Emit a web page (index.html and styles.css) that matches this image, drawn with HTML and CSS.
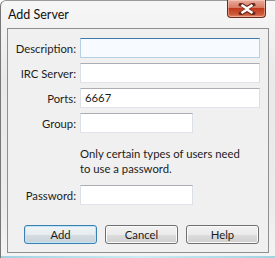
FILE: index.html
```html
<!DOCTYPE html>
<html>
<head>
<meta charset="utf-8">
<link rel="stylesheet" href="styles.css">
</head>
<body>
<div class="window">
  <div class="titlebar">
    <span class="title">Add Server</span>
    <div class="close">
      <svg width="18" height="12" viewBox="0 0 18 12">
        <path d="M3 1.5 L9 5 L15 1.5 M3 10.5 L9 7 L15 10.5" fill="none" stroke="#6a2a1c" stroke-width="4.2" stroke-linecap="square"/>
        <path d="M3.5 2 L9 5.5 L14.5 2 M3.5 10 L9 6.5 L14.5 10" fill="none" stroke="#ffffff" stroke-width="2.6"/>
      </svg>
    </div>
  </div>
  <div class="panel">
    <div class="form">
      <label class="lbl">Description:</label>
      <div class="field wide focus"></div>
      <label class="lbl">IRC Server:</label>
      <div class="field wide"></div>
      <label class="lbl">Ports:</label>
      <div class="field wide">6667</div>
      <label class="lbl">Group:</label>
      <div class="field short"></div>
      <div></div>
      <p class="note">Only certain types of users need<br>to use a password.</p>
      <label class="lbl">Password:</label>
      <div class="field short"></div>
    </div>
    <div class="buttons">
      <div class="btn default">Add</div>
      <div class="btn">Cancel</div>
      <div class="btn">Help</div>
    </div>
  </div>
</div>
</body>
</html>
```
FILE: styles.css
```css
html, body {
  margin: 0;
  padding: 0;
  background: #ffffff;
}
body {
  font-family: Lato, "Noto Sans", sans-serif;
  font-size: 11.3px;
  color: #1c1c1c;
}
.window {
  width: 275px;
  height: 258px;
  box-sizing: border-box;
  border-left: 1px solid #777;
  border-top: 1px solid #9a9a9a;
  border-radius: 6px 0 0 0;
  background: linear-gradient(#f7f7f7, #e9e9e9 30%, #ececec 80%, #f4f4f4);
  display: flex;
  flex-direction: column;
  position: relative;
}
.titlebar {
  height: 27px;
  display: flex;
  justify-content: space-between;
  align-items: flex-start;
  padding-left: 7px;
  padding-right: 9px;
}
.title {
  font-size: 12.5px;
  margin-top: 6px;
  color: #111;
}
.close {
  margin-top: -1px;
  width: 39px;
  height: 18px;
  box-sizing: border-box;
  border: 1px solid #6e2a1d;
  border-top: none;
  border-radius: 0 0 4px 4px;
  background: linear-gradient(#e9ae9e, #d87a62 45%, #c0391c 50%, #cf5a3c 85%, #e08a6c);
  display: flex;
  align-items: center;
  justify-content: center;
  box-shadow: inset 0 0 0 1px rgba(255,220,210,0.45);
}
.close svg { display: block; margin-top: 1px; }
.panel {
  margin-left: 6px;
  width: 262px;
  height: 225px;
  box-sizing: border-box;
  border: 1px solid #8e8f8f;
  background: #f0f0f0;
  padding-top: 9px;
  padding-left: 16px;
}
.form {
  display: grid;
  grid-template-columns: 68px auto;
  column-gap: 4px;
  row-gap: 5px;
  margin-left: -16px;
  align-items: center;
}
.lbl {
  text-align: right;
  white-space: nowrap;
}
.field {
  height: 20px;
  box-sizing: border-box;
  background: #fff;
  border: 1px solid #e2e3ea;
  border-top-color: #abadb3;
  border-left-color: #dbdfe6;
  border-right-color: #dbdfe6;
  padding-left: 4px;
  line-height: 18px;
}
.field.wide { width: 180px; }
.field.short { width: 113px; }
.field.focus {
  border-color: #b5cfe7;
  border-top-color: #3d7bad;
  background: #f7fbff;
}
.note {
  margin: 8px 0 4px 0;
  line-height: 15px;
}
.buttons {
  display: flex;
  gap: 8px;
  margin-top: 20px;
}
.btn {
  width: 73px;
  height: 19px;
  box-sizing: border-box;
  border: 1px solid #707070;
  border-radius: 3px;
  background: linear-gradient(#f2f2f2, #ebebeb 50%, #dddddd 51%, #cfcfcf);
  box-shadow: inset 0 0 0 1px #fbfbfb;
  text-align: center;
  line-height: 17px;
}
.btn.default {
  border-color: #3c7fb1;
  box-shadow: inset 0 0 0 1px #bfe6f7;
  background: linear-gradient(#f0f4f6, #e6ecef 50%, #d5dde2 51%, #c8d2d8);
}
.window::after {
  content: "";
  position: absolute;
  left: 0;
  right: 0;
  bottom: 0;
  height: 2px;
  background: linear-gradient(90deg, #9fd2e2, #c9ecf5 50%, #9fd2e2);
}
```
